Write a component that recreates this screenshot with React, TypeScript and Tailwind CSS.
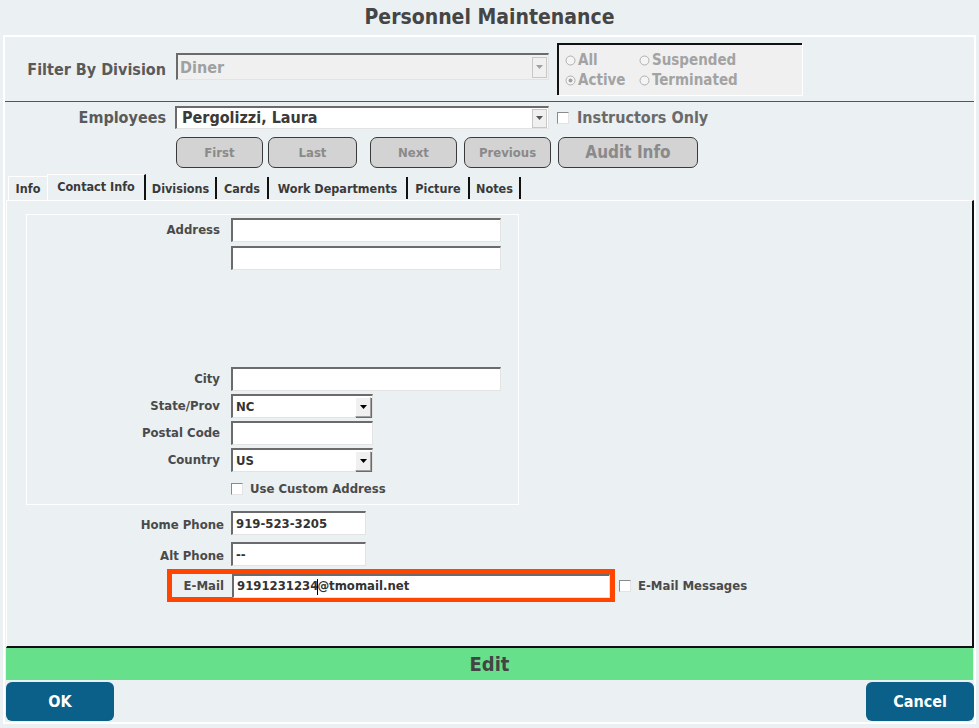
import React from "react";

const F = { fontFamily: '"DejaVu Sans Condensed", "DejaVu Sans", sans-serif' };

function Input({ w, value, caret }: { w: string; value?: string; caret?: number }) {
  return (
    <div className={`${w} h-[24px] bg-white border-t-2 border-l-2 border-b border-r border-t-[#6b6b6b] border-l-[#6b6b6b] border-b-[#e3e3e3] border-r-[#e3e3e3] flex items-center pl-[3px] text-[13px] font-bold text-[#333]`}>
      {caret !== undefined && value ? (
        <span>
          {value.slice(0, caret)}
          <span className="inline-block w-px h-[16px] bg-black align-middle -mx-px" />
          {value.slice(caret)}
        </span>
      ) : (
        <span>{value}</span>
      )}
    </div>
  );
}

function Select({ w, value }: { w: string; value: string }) {
  return (
    <div className={`${w} h-[24px] bg-white border-t-2 border-l-2 border-b border-r border-t-[#6b6b6b] border-l-[#6b6b6b] border-b-[#e3e3e3] border-r-[#e3e3e3] flex items-center text-[13px] font-bold text-[#333]`}>
      <span className="flex-1 pl-[3px]">{value}</span>
      <div className="w-[16px] h-[20px] mr-[1px] bg-[#f0f0f0] border border-[#a0a0a0] border-t-white border-l-white shadow-[1px_1px_0_#6b6b6b] flex items-center justify-center">
        <svg width="7" height="4" viewBox="0 0 7 4"><path d="M0 0h7L3.5 4z" fill="#000" /></svg>
      </div>
    </div>
  );
}

function Check({ className = "" }: { className?: string }) {
  return <div className={`w-[12px] h-[12px] bg-white border border-[#8a8a8a] border-b-[#e3e3e3] border-r-[#e3e3e3] ${className}`} />;
}

function Radio({ checked }: { checked?: boolean }) {
  return (
    <svg width="11" height="11" viewBox="0 0 11 11" className="mr-[2px]">
      <circle cx="5.5" cy="5.5" r="4.5" fill="#f4f4f4" stroke="#b0b0b0" strokeWidth="1" />
      {checked && <circle cx="5.5" cy="5.5" r="2" fill="#a0a0a0" />}
    </svg>
  );
}

function NavBtn({ w, label, big }: { w: string; label: string; big?: boolean }) {
  return (
    <div className={`${w} h-[31px] rounded-[7px] bg-[#d3d3d3] border border-[#3a3a3a] flex items-center justify-center font-bold text-[#8a8a8a] ${big ? "text-[17px]" : "text-[13px]"}`}>
      {label}
    </div>
  );
}

function Row({ label, children, h, mt }: { label: string; children: React.ReactNode; h: string; mt: string }) {
  return (
    <div className={`flex items-center ${h} ${mt}`}>
      <div className="w-[204px] text-right pr-[11px] text-[13px] font-bold text-[#4a4a4a]">{label}</div>
      {children}
    </div>
  );
}

const tabs = [
  { label: "Info", w: "w-[39px]" },
  { label: "Contact Info", w: "w-[99px]", active: true },
  { label: "Divisions", w: "w-[71px]" },
  { label: "Cards", w: "w-[52px]" },
  { label: "Work Departments", w: "w-[139px]" },
  { label: "Picture", w: "w-[62px]" },
  { label: "Notes", w: "w-[51px]" },
];

export default function App() {
  return (
    <div style={F} className="w-[979px] h-[728px] bg-[#ebf0f3] overflow-hidden text-[#444]">
      <div className="h-[35px] flex items-center justify-center text-[21px] font-bold text-[#454545]">Personnel Maintenance</div>
      <div className="ml-[3px] w-[973px] h-[689px] border-2 border-white flex flex-col">
        {/* filter section */}
        <div className="h-[65px] flex items-start border-b border-[#555]">
          <div className="w-[161px] text-right text-[16px] font-bold text-[#5a5a5a] mt-[21px]">Filter By Division</div>
          <div className="ml-[10px] mt-[16px] w-[373px] h-[27px] bg-[#f0f0f0] border-t-2 border-l-2 border-b border-r border-t-[#6b6b6b] border-l-[#6b6b6b] border-b-[#e3e3e3] border-r-[#e3e3e3] flex items-center">
            <span className="flex-1 pl-[2px] pt-[2px] text-[16px] font-bold text-[#a0a0a0]">Diner</span>
            <div className="w-[15px] h-[21px] mr-[1px] bg-[#f0f0f0] border border-[#c8c8c8] flex items-center justify-center">
              <svg width="7" height="4" viewBox="0 0 7 4"><path d="M0 0h7L3.5 4z" fill="#a0a0a0" /></svg>
            </div>
          </div>
          <div className="ml-[8px] mt-[6px] w-[245px] h-[52px] bg-[#f0f0f0] border-t-2 border-l-2 border-[#111] border-b-0 border-r-0 shadow-[1px_1px_0_#fff] pl-[6px] pt-[5px] text-[15px] font-bold text-[#a3a3a3] leading-[20px]">
            <div className="flex">
              <div className="w-[74px] flex items-center"><Radio />All</div>
              <div className="flex items-center"><Radio />Suspended</div>
            </div>
            <div className="flex">
              <div className="w-[74px] flex items-center"><Radio checked />Active</div>
              <div className="flex items-center"><Radio />Terminated</div>
            </div>
          </div>
        </div>
        {/* employees */}
        <div className="flex items-center h-[27px] mt-[2px]">
          <div className="w-[161px] text-right text-[16px] font-bold text-[#5a5a5a]">Employees</div>
          <div className="ml-[9px] w-[374px] h-[23px] bg-white border-t-2 border-l-2 border-b border-r border-t-[#6b6b6b] border-l-[#6b6b6b] border-b-[#e3e3e3] border-r-[#e3e3e3] flex items-center">
            <span className="flex-1 pl-[5px] text-[16px] font-bold text-[#3a3a3a]">Pergolizzi, Laura</span>
            <div className="w-[15px] h-[19px] mr-[1px] bg-[#f0f0f0] border border-[#c8c8c8] flex items-center justify-center">
              <svg width="7" height="4" viewBox="0 0 7 4"><path d="M0 0h7L3.5 4z" fill="#555" /></svg>
            </div>
          </div>
          <Check className="ml-[8px]" />
          <span className="ml-[8px] text-[16px] font-bold text-[#6a6a6a]">Instructors Only</span>
        </div>
        {/* nav buttons */}
        <div className="flex items-center mt-[6px] pl-[171px]">
          <NavBtn w="w-[87px]" label="First" />
          <div className="ml-[5px]"><NavBtn w="w-[89px]" label="Last" /></div>
          <div className="ml-[13px]"><NavBtn w="w-[87px]" label="Next" /></div>
          <div className="ml-[7px]"><NavBtn w="w-[87px]" label="Previous" /></div>
          <div className="ml-[7px]"><NavBtn w="w-[140px]" label="Audit Info" big /></div>
        </div>
        {/* tabs */}
        <div className="flex items-end h-[32px] pl-[3px]">
          {tabs.map((t) =>
            t.active ? (
              <div key={t.label} className={`${t.w} h-[26px] border-t border-l border-white flex items-start justify-center pt-[3px] text-[12.5px] font-bold text-[#3a3a3a] border-r-2 border-r-[#111]`}>
                {t.label}
              </div>
            ) : (
              <div key={t.label} className={`${t.w} flex items-center justify-center pt-[2px] text-[12.5px] font-bold text-[#3a3a3a] ${t.label === "Info" ? "h-[24px] border-t border-l border-white" : "border-r-2 border-[#111] mb-[1px] h-[22px]"}`}>
                {t.label}
              </div>
            )
          )}
        </div>
        {/* content */}
        <div className="ml-[1px] w-[968px] h-[448px] border-t border-l border-white border-r-2 border-b-2 border-r-[#111] border-b-[#111] pt-[13px] pl-[19px]">
          <div className="w-[493px] h-[291px] border border-white pt-[3px]">
            <Row label="Address" h="h-[24px]" mt="mt-0">
              <Input w="w-[270px]" />
            </Row>
            <Row label="" h="h-[24px]" mt="mt-[4px]">
              <Input w="w-[270px]" />
            </Row>
            <Row label="City" h="h-[24px]" mt="mt-[97px]">
              <Input w="w-[270px]" />
            </Row>
            <Row label="State/Prov" h="h-[24px]" mt="mt-[3px]">
              <Select w="w-[142px]" value="NC" />
            </Row>
            <Row label="Postal Code" h="h-[24px]" mt="mt-[3px]">
              <Input w="w-[142px]" />
            </Row>
            <Row label="Country" h="h-[24px]" mt="mt-[3px]">
              <Select w="w-[142px]" value="US" />
            </Row>
            <div className="flex items-center mt-[7px] pl-[204px]">
              <Check />
              <span className="ml-[7px] text-[13px] font-bold text-[#4a4a4a]">Use Custom Address</span>
            </div>
          </div>
          <div className="flex items-center h-[24px] mt-[6px]">
            <div className="w-[198px] text-right text-[13px] font-bold text-[#4a4a4a] pt-[3px]">Home Phone</div>
            <div className="ml-[7px]"><Input w="w-[135px]" value="919-523-3205" /></div>
          </div>
          <div className="flex items-center h-[24px] mt-[7px]">
            <div className="w-[198px] text-right text-[13px] font-bold text-[#4a4a4a] pt-[3px]">Alt Phone</div>
            <div className="ml-[7px]"><Input w="w-[135px]" value="--" /></div>
          </div>
          <div className="flex items-center mt-[3px]">
            <div className="ml-[141px] w-[448px] h-[33px] border-[5px] border-[#ff4500] flex items-center">
              <div className="w-[56px] text-right pr-[3px] text-[13px] font-bold text-[#4a4a4a]">E-Mail</div>
              <div className="ml-[5px]"><Input w="w-[378px]" value="9191231234@tmomail.net" caret={10} /></div>
            </div>
            <Check className="ml-[4px]" />
            <span className="ml-[7px] text-[13px] font-bold text-[#4a4a4a]">E-Mail Messages</span>
          </div>
        </div>
        {/* edit bar */}
        <div className="ml-[1px] w-[967px] h-[32px] bg-[#66e08a] flex items-center justify-center text-[20px] font-bold text-[#444]">Edit</div>
        {/* buttons */}
        <div className="flex justify-between mt-[2px] px-[1px]">
          <div className="w-[108px] h-[39px] rounded-[6px] bg-[#0a6088] flex items-center justify-center text-white text-[16px] font-bold">OK</div>
          <div className="w-[108px] h-[39px] rounded-[6px] bg-[#0a6088] flex items-center justify-center text-white text-[16px] font-bold mr-[-1px]">Cancel</div>
        </div>
      </div>
    </div>
  );
}
